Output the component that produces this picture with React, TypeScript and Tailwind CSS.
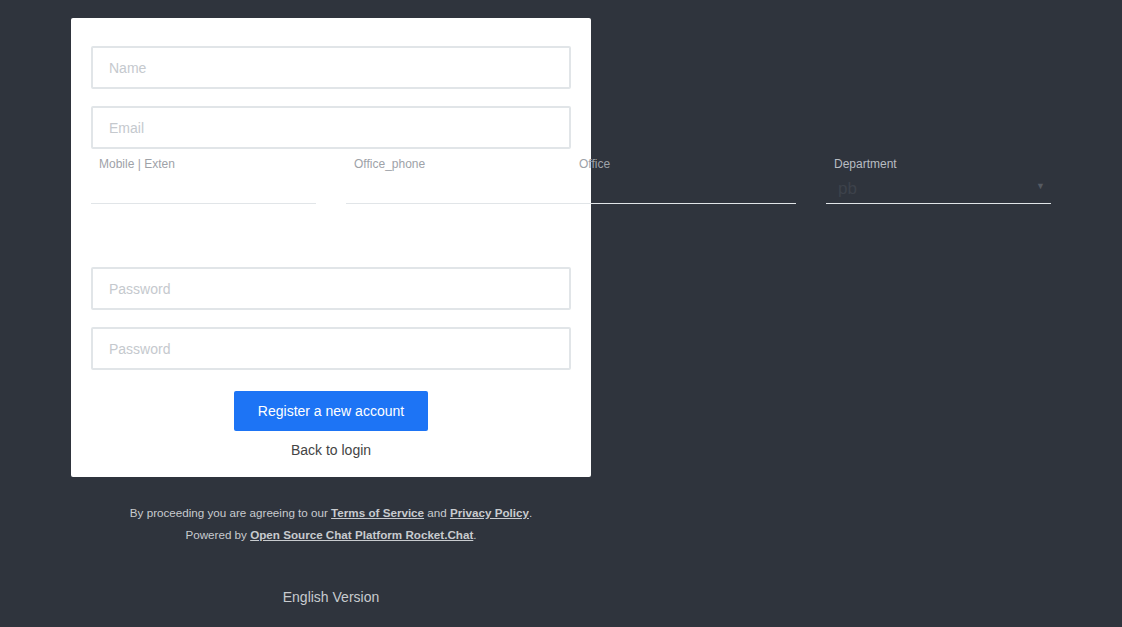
import React from 'react'

const font = { fontFamily: '"Liberation Sans", Arial, sans-serif' }

function TextInput({ placeholder, type = 'text' }: { placeholder: string; type?: string }) {
  return (
    <input
      type={type}
      placeholder={placeholder}
      className="block w-full h-[43px] border-2 border-[#e1e5e8] rounded-[2px] bg-white pl-[16px] text-[14px] text-[#444] placeholder:text-[#c5c9ce] outline-none"
    />
  )
}

function LineField({ label, className = '' }: { label: string; className?: string }) {
  return (
    <div className={`w-[225px] shrink-0 ${className}`}>
      <label className="block pl-[8px] text-[12px] leading-[14px] text-[#9ea2a8]">{label}</label>
      <input className="block w-full h-[33px] bg-transparent border-b border-[#e1e5e8] outline-none text-[14px]" />
    </div>
  )
}

export default function App() {
  return (
    <div className="min-h-[627px] w-full bg-[#2f343d] overflow-hidden" style={font}>
      <div className="ml-[71px] w-[520px] pt-[18px]">
        <div className="bg-white rounded-[2px] px-[20px] pt-[28px] pb-[19px]">
          <div className="flex flex-col gap-[17px]">
            <TextInput placeholder="Name" />
            <TextInput placeholder="Email" type="email" />
          </div>

          {/* this row is wider than the card and runs out over the page */}
          <div className="flex pt-[8px] mb-[63px] w-[960px]">
            <LineField label="Mobile | Exten" />
            <LineField label="Office_phone" className="ml-[30px]" />
            <LineField label="Office" />
            <div className="w-[225px] shrink-0 ml-[30px]">
              <label className="block pl-[8px] text-[12px] leading-[14px] text-[#b8bcc2]">Department</label>
              <div className="relative h-[33px] border-b border-[#e1e5e8]">
                <span className="absolute left-[12px] top-[5px] text-[17px] text-[#3d424b]">pb</span>
                <span className="absolute right-[6px] top-[9px] text-[9px] text-[#555a62]">▼</span>
              </div>
            </div>
          </div>

          <div className="flex flex-col gap-[17px]">
            <TextInput placeholder="Password" type="password" />
            <TextInput placeholder="Password" type="password" />
          </div>

          <div className="flex flex-col items-center mt-[21px]">
            <button className="w-[194px] h-[40px] rounded-[2px] bg-[#1d74f5] text-white text-[14px]">
              Register a new account
            </button>
            <a className="mt-[11px] text-[14px] leading-[16px] text-[#444] cursor-pointer">Back to login</a>
          </div>
        </div>

        <div className="mt-[25px] text-center text-[11.65px] leading-[22px] text-[#c8cbcf]">
          <p>
            By proceeding you are agreeing to our{' '}
            <a className="font-bold underline">Terms of Service</a> and{' '}
            <a className="font-bold underline">Privacy Policy</a>.
          </p>
          <p>
            Powered by <a className="font-bold underline">Open Source Chat Platform Rocket.Chat</a>.
          </p>
        </div>

        <div className="mt-[43px] text-center text-[14px] leading-[16px] text-[#c8cbcf]">English Version</div>
      </div>
    </div>
  )
}
